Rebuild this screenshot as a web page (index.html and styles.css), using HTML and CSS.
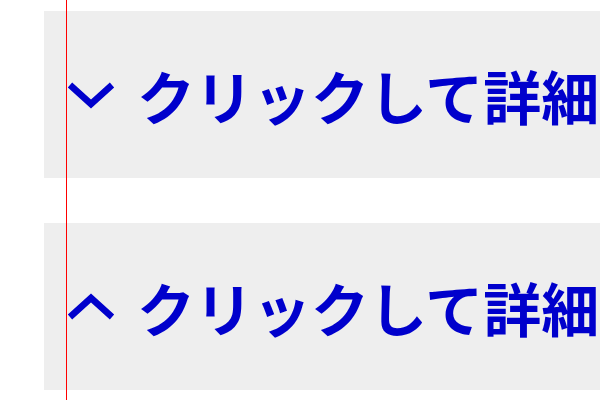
FILE: index.html
```html
<!DOCTYPE html>
<html lang="ja">
<head>
<meta charset="utf-8">
<link rel="stylesheet" href="styles.css">
</head>
<body>
<div class="page">
  <div class="item">
    <svg class="chev" width="48" height="28" viewBox="0 0 48 28"><polyline points="3,4 24,23 45,4" fill="none" stroke="#0000cc" stroke-width="6.5"/></svg>
    <span class="label">クリックして詳細</span>
  </div>
  <div class="item">
    <svg class="chev" width="48" height="28" viewBox="0 0 48 28"><polyline points="3,24 24,5 45,24" fill="none" stroke="#0000cc" stroke-width="6.5"/></svg>
    <span class="label">クリックして詳細</span>
  </div>
</div>
<div class="guide"></div>
</body>
</html>
```
FILE: styles.css
```css
html, body {
  margin: 0;
  padding: 0;
  background: #ffffff;
  overflow: hidden;
}
.page {
  padding-top: 11px;
  padding-left: 44px;
  display: flex;
  flex-direction: column;
  gap: 45px;
}
.item {
  background: #eeeeee;
  height: 167px;
  display: flex;
  align-items: center;
  padding-left: 23px;
  gap: 22px;
  box-sizing: border-box;
  overflow: hidden;
}
.chev {
  flex: none;
  display: block;
}
.label {
  font-family: "Noto Sans CJK JP", "Noto Sans", sans-serif;
  font-size: 58px;
  font-weight: 700;
  line-height: 1;
  color: #0000cc;
  white-space: nowrap;
}
.guide {
  position: absolute;
  left: 66px;
  top: 0;
  width: 1px;
  height: 400px;
  background: #ff0000;
}
```
